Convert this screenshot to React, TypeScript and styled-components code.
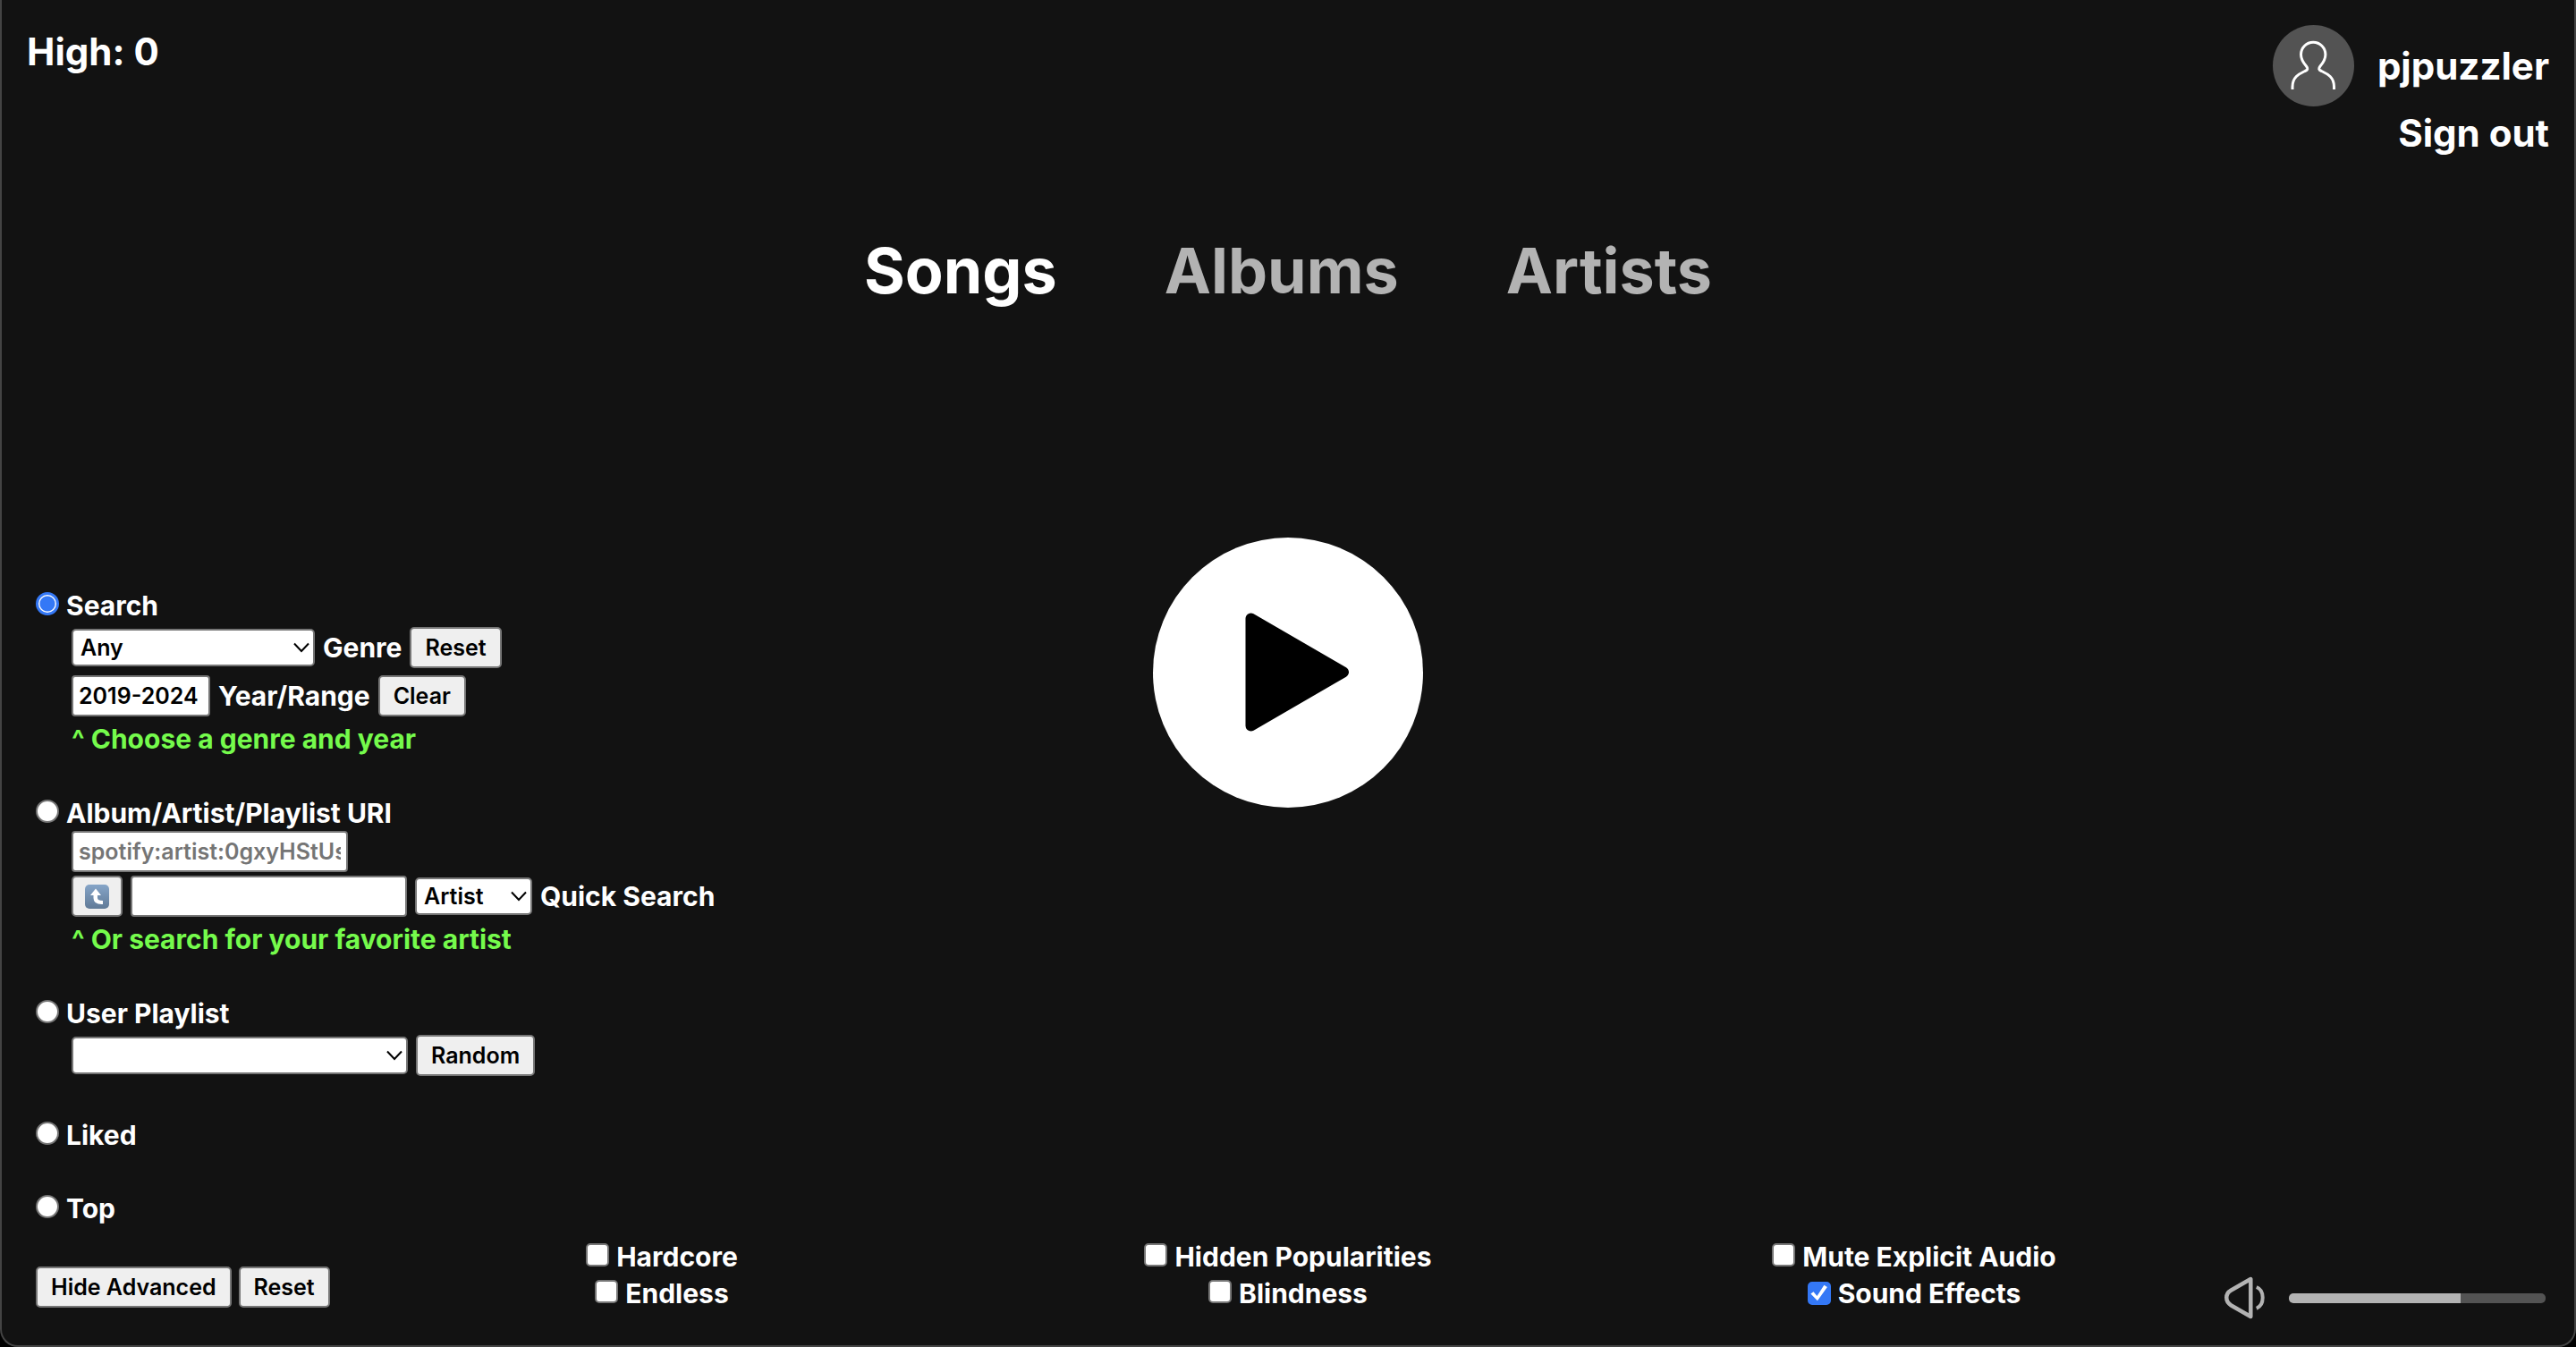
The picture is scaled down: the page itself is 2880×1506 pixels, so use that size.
import React, { useState } from "react";
import styled, { createGlobalStyle } from "styled-components";

const GlobalStyle = createGlobalStyle`
  *, *::before, *::after { box-sizing: border-box; }
  body {
    margin: 0;
    background: #000;
    color: #fff;
    font-family: Inter, "Liberation Sans", sans-serif;
    font-size: 30px;
    font-weight: 700;
    line-height: 40px;
  }
  button, input, select { margin: 0; font-family: inherit; font-weight: 600; }
`;

const Frame = styled.div`
  display: flex;
  flex-direction: column;
  min-height: 100vh;
  background: #121212;
  border: 2px solid #444;
  border-top: 0;
  border-radius: 0 0 20px 20px;
`;

const Header = styled.header`
  display: flex;
  justify-content: space-between;
  padding: 28px 28px 0;
  font-size: 42px;
  line-height: 60px;
`;

const Account = styled.div`
  display: flex;
  flex-direction: column;
  align-items: flex-end;
`;

const Profile = styled.a`
  display: flex;
  align-items: center;
  gap: 26px;
  color: #fff;
  text-decoration: none;
`;

const Avatar = styled.span`
  display: block;
  width: 91px;
  height: 91px;
  border-radius: 50%;
  background: #535353;
  svg { display: block; }
`;

const PlainButton = styled.button`
  padding: 0;
  border: 0;
  background: none;
  color: #fff;
  font-size: inherit;
  font-weight: 700;
  line-height: inherit;
  cursor: pointer;
`;

const Tabs = styled.nav`
  display: flex;
  justify-content: center;
  gap: 120px;
  margin-top: 74px;
  font-size: 70px;
  line-height: 100px;
`;

const Tab = styled(PlainButton)<{ $active: boolean }>`
  color: ${(p) => (p.$active ? "#fff" : "#b3b3b3")};
`;

const Main = styled.main`
  display: grid;
  grid-template-columns: 1fr auto 1fr;
  align-items: start;
  flex: 1;
  padding: 248px 38px 0;
`;

const PlayButton = styled.button`
  display: grid;
  place-items: center;
  width: 302px;
  height: 302px;
  padding: 0;
  border: 0;
  border-radius: 50%;
  background: #fff;
  cursor: pointer;
`;

const Sources = styled.form`
  display: flex;
  flex-direction: column;
  gap: 42px;
  padding-top: 56px;
`;

const Choice = styled.label`
  display: flex;
  align-items: baseline;
  gap: 8px;
`;

const Indent = styled.div`
  padding-left: 40px;
`;

const FieldRow = styled.div<{ $compact?: boolean }>`
  display: flex;
  align-items: center;
  gap: 9px;
  height: ${(p) => (p.$compact ? 50 : 54)}px;
  padding-bottom: ${(p) => (p.$compact ? 4 : 0)}px;
`;

const Hint = styled.p`
  margin: 0;
  color: #75fb4c;
  line-height: 42px;
`;

const Radio = styled.input`
  appearance: none;
  width: 26px;
  height: 26px;
  border: 2px solid #767676;
  border-radius: 50%;
  background: #fff;
  &:checked {
    border: 3px solid #3478f6;
    background: radial-gradient(circle, #3478f6 8px, #fff 9px);
  }
`;

const Check = styled.input`
  appearance: none;
  display: inline-grid;
  width: 26px;
  height: 26px;
  border: 2px solid #767676;
  border-radius: 5px;
  background: #fff;
  &:checked {
    border-color: #3478f6;
    background: #3478f6;
  }
  &:checked::before {
    content: "";
    background: #fff;
    clip-path: polygon(8% 52%, 22% 42%, 40% 64%, 76% 8%, 92% 18%, 42% 88%);
  }
`;

const Button = styled.button<{ $icon?: boolean }>`
  height: 46px;
  padding: 0 ${(p) => (p.$icon ? 13 : 15)}px;
  border: 2px solid #767676;
  border-radius: 5px;
  background: #efefef;
  color: #000;
  font-size: 25px;
  line-height: 42px;
  cursor: pointer;
  svg { display: block; }
`;

const TextBox = styled.input<{ $width: number }>`
  width: ${(p) => p.$width}px;
  height: 46px;
  padding: 0 6px;
  border: 2px solid #767676;
  border-radius: 4px;
  background: #fff;
  color: #000;
  font-size: 25px;
  &::placeholder { color: #757575; opacity: 1; }
`;

const SelectBox = styled.span<{ $width: number }>`
  position: relative;
  display: block;
  width: ${(p) => p.$width}px;
  svg {
    position: absolute;
    top: 15px;
    right: 6px;
    pointer-events: none;
  }
`;

const Select = styled.select`
  appearance: none;
  display: block;
  width: 100%;
  height: 42px;
  padding: 0 8px;
  border: 2px solid #767676;
  border-radius: 5px;
  background: #fff;
  color: #000;
  font-size: 25px;
`;

const Footer = styled.footer`
  display: grid;
  grid-template-columns: 350px 1fr 1fr 1fr 360px;
  align-items: end;
  padding: 0 28px 28px 38px;
`;

const Actions = styled.div`
  display: flex;
  gap: 8px;
  padding-bottom: 14px;
`;

const Options = styled.div`
  display: flex;
  flex-direction: column;
  align-items: center;
  padding-bottom: 9px;
  line-height: 41px;
`;

const Volume = styled.div`
  display: flex;
  align-items: center;
  justify-content: flex-end;
  gap: 26px;
  padding-right: 4px;
`;

const MuteButton = styled(PlainButton)`
  svg { display: block; }
`;

const VolumeSlider = styled.input<{ $level: number }>`
  appearance: none;
  flex: none;
  width: 287px;
  height: 11px;
  border-radius: 5px;
  background: linear-gradient(
    to right,
    #b3b3b3 ${(p) => p.$level}%,
    #535353 ${(p) => p.$level}%
  );
  &::-webkit-slider-thumb {
    appearance: none;
    width: 1px;
    height: 11px;
  }
`;

const ArrowDown = () => (
  <svg width="18" height="12" viewBox="0 0 18 12" fill="none" stroke="#000" strokeWidth="2" aria-hidden="true">
    <path d="M1 1.5 9 10l8-8.5" />
  </svg>
);

const PersonIcon = () => (
  <svg width="91" height="91" viewBox="0 0 91 91" fill="none" stroke="#fff" strokeWidth="3" aria-hidden="true">
    <path d="M22 72V69C22 57 31 54 36 51.5C39.500 50 39.500 48.500 37.500 46C34 42 31.500 38 31.500 33A13.700 13.700 0 0 1 58.900 33C58.900 38 56.500 42 53 46C51 48.500 51 50 54.500 51.500C59.500 54 68.500 57 68.500 69V72" />
  </svg>
);

const PlayIcon = () => (
  <svg width="302" height="302" viewBox="0 0 302 302" aria-hidden="true">
    <path
      d="M109.500 90.500V210.500L213 150.500Z"
      fill="#000"
      stroke="#000"
      strokeWidth="12"
      strokeLinejoin="round"
    />
  </svg>
);

const SpeakerIcon = () => (
  <svg width="48" height="50" viewBox="0 0 48 50" fill="none" stroke="#b3b3b3" strokeWidth="4.500" strokeLinejoin="round" aria-hidden="true">
    <path d="M31.300 4V46L9.500 33.500C2.500 29 2.500 20.500 9.500 16.500Z" />
    <path d="M37.800 13C47 16.500 47 33 37.800 36.800" strokeWidth="4" />
  </svg>
);

const ReturnIcon = () => (
  <svg width="27" height="27" viewBox="0 0 27 27" aria-hidden="true">
    <defs>
      <linearGradient id="key" x1="0" y1="0" x2="0" y2="1">
        <stop offset="0" stopColor="#86a5c8" />
        <stop offset="1" stopColor="#607a97" />
      </linearGradient>
    </defs>
    <rect width="27" height="27" rx="5" fill="url(#key)" />
    <path d="M12 4.500 18 12H14V15Q14 18 20 18V22Q9.500 22.500 9.500 15V12H6Z" fill="#fff" />
  </svg>
);

const tabNames = ["Songs", "Albums", "Artists"];

const optionColumns = [
  ["Hardcore", "Endless"],
  ["Hidden Popularities", "Blindness"],
  ["Mute Explicit Audio", "Sound Effects"],
];

type SourceProps = { name: string; checked?: boolean };

const Source = ({ name, checked }: SourceProps) => (
  <Choice>
    <Radio type="radio" name="source" defaultChecked={checked} />
    {name}
  </Choice>
);

export default function App() {
  const [tab, setTab] = useState("Songs");
  const [level, setLevel] = useState(67);

  return (
    <>
      <GlobalStyle />
      <Frame>
        <Header>
          <span>High: 0</span>
          <Account>
            <Profile href="#profile">
              <Avatar>
                <PersonIcon />
              </Avatar>
              pjpuzzler
            </Profile>
            <PlainButton type="button">Sign out</PlainButton>
          </Account>
        </Header>

        <Tabs>
          {tabNames.map((name) => (
            <Tab key={name} type="button" $active={name === tab} onClick={() => setTab(name)}>
              {name}
            </Tab>
          ))}
        </Tabs>

        <Main>
          <Sources>
            <div>
              <Source name="Search" checked />
              <Indent>
                <FieldRow>
                  <SelectBox $width={272}>
                    <Select id="genre">
                      <option>Any</option>
                    </Select>
                    <ArrowDown />
                  </SelectBox>
                  <label htmlFor="genre">Genre</label>
                  <Button type="button">Reset</Button>
                </FieldRow>
                <FieldRow>
                  <TextBox id="years" $width={155} defaultValue="2019-2024" />
                  <label htmlFor="years">Year/Range</label>
                  <Button type="button">Clear</Button>
                </FieldRow>
                <Hint>^ Choose a genre and year</Hint>
              </Indent>
            </div>

            <div>
              <Source name="Album/Artist/Playlist URI" />
              <Indent>
                <FieldRow $compact>
                  <TextBox $width={309} aria-label="URI" placeholder="spotify:artist:0gxyHStUsqpMadRV0Di1Qt" />
                </FieldRow>
                <FieldRow $compact>
                  <Button type="button" aria-label="Use result" $icon>
                    <ReturnIcon />
                  </Button>
                  <TextBox id="quick" $width={309} />
                  <SelectBox $width={131}>
                    <Select aria-label="Type">
                      <option>Artist</option>
                    </Select>
                    <ArrowDown />
                  </SelectBox>
                  <label htmlFor="quick">Quick Search</label>
                </FieldRow>
                <Hint>^ Or search for your favorite artist</Hint>
              </Indent>
            </div>

            <div>
              <Source name="User Playlist" />
              <Indent>
                <FieldRow>
                  <SelectBox $width={376}>
                    <Select aria-label="Playlist" />
                    <ArrowDown />
                  </SelectBox>
                  <Button type="button">Random</Button>
                </FieldRow>
              </Indent>
            </div>

            <Source name="Liked" />
            <Source name="Top" />
          </Sources>

          <PlayButton type="button" aria-label="Play">
            <PlayIcon />
          </PlayButton>
        </Main>

        <Footer>
          <Actions>
            <Button type="button">Hide Advanced</Button>
            <Button type="button">Reset</Button>
          </Actions>
          {optionColumns.map((column) => (
            <Options key={column[0]}>
              {column.map((name) => (
                <Choice key={name}>
                  <Check type="checkbox" defaultChecked={name === "Sound Effects"} />
                  {name}
                </Choice>
              ))}
            </Options>
          ))}
          <Volume>
            <MuteButton type="button" aria-label="Mute">
              <SpeakerIcon />
            </MuteButton>
            <VolumeSlider
              type="range"
              aria-label="Volume"
              min={0}
              max={100}
              value={level}
              $level={level}
              onChange={(e) => setLevel(Number(e.target.value))}
            />
          </Volume>
        </Footer>
      </Frame>
    </>
  );
}
